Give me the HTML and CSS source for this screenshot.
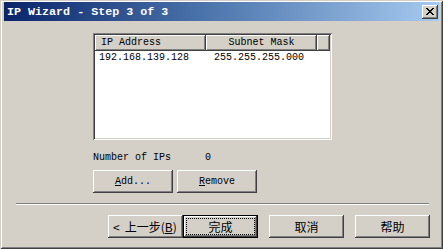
FILE: index.html
```html
<!DOCTYPE html>
<html>
<head>
<meta charset="utf-8">
<link rel="stylesheet" href="styles.css">
</head>
<body>
<div class="window">
  <div class="titlebar">
    <span class="title">IP Wizard - Step 3 of 3</span>
    <span class="close">
      <svg width="8" height="7" viewBox="0 0 8 7"><path d="M0 0h2v1h1v1h2v-1h1v-1h2v1h-1v1h-1v1h-1v1h1v1h1v1h1v1h-2v-1h-1v-1h-2v1h-1v1h-2v-1h1v-1h1v-1h1v-1h-1v-1h-1v-1h-1z" fill="#000"/></svg>
    </span>
  </div>
  <div class="content">
    <div class="listbox">
      <div class="lv-header">
        <div class="lv-col c1">IP Address</div>
        <div class="lv-col c2">Subnet Mask</div>
        <div class="lv-col c3"></div>
      </div>
      <div class="lv-row">
        <span class="cell c1">192.168.139.128</span>
        <span class="cell c2">255.255.255.000</span>
      </div>
    </div>
    <div class="info">
      <span class="label">Number of IPs</span>
      <span class="count">0</span>
    </div>
    <div class="btnrow">
      <button class="btn wide"><u>A</u>dd...</button>
      <button class="btn wide"><u>R</u>emove</button>
    </div>
    <div class="sep"></div>
    <div class="navrow">
      <button class="btn cjk back"><span class="lt">&lt;</span>上一步(<u>B</u>)</button>
      <button class="btn cjk default"><span class="focus">完成</span></button>
      <button class="btn cjk gap1">取消</button>
      <button class="btn cjk gap2">帮助</button>
    </div>
  </div>
</div>
</body>
</html>
```

FILE: styles.css
```css
* { box-sizing: border-box; }
html, body { margin: 0; padding: 0; }
body {
  width: 443px;
  height: 249px;
  background: #d4d0c8;
  overflow: hidden;
  font-family: "Liberation Mono", "DejaVu Sans Mono", monospace;
  font-size: 10px;
  color: #000;
}
.window {
  width: 443px;
  height: 249px;
  background: #d4d0c8;
  padding: 2px 4px 0 4px;
  box-shadow: inset 1px 1px 0 #d4d0c8, inset -1px -1px 0 #404040,
              inset 2px 2px 0 #ffffff, inset -2px -2px 0 #808080;
  display: flex;
  flex-direction: column;
}
.titlebar {
  height: 19px;
  background: linear-gradient(to right, #0a246a 0%, #4a72aa 45%, #a6caf0 100%);
  display: flex;
  align-items: center;
  justify-content: space-between;
  padding: 0 1px 0 3px;
}
.title {
  color: #fff;
  font-weight: bold;
  font-size: 11.7px;
  font-family: "Liberation Mono", monospace;
  white-space: pre;
}
.close {
  width: 16px;
  height: 14px;
  background: #d4d0c8;
  box-shadow: inset -1px -1px 0 #404040, inset 1px 1px 0 #ffffff,
              inset -2px -2px 0 #808080;
  display: flex;
  align-items: center;
  justify-content: center;
  padding-bottom: 1px;
}
.close svg { display: block; }
.content {
  display: flex;
  flex-direction: column;
}
.listbox {
  margin: 12px 0 0 89px;
  width: 239px;
  height: 107px;
  background: #fff;
  padding: 2px;
  box-shadow: inset 1px 1px 0 #808080, inset -1px -1px 0 #ffffff,
              inset 2px 2px 0 #404040, inset -2px -2px 0 #d4d0c8;
}
.lv-header {
  display: flex;
  height: 16px;
}
.lv-col {
  height: 16px;
  background: #d4d0c8;
  box-shadow: inset -1px -1px 0 #404040, inset 1px 1px 0 #ffffff,
              inset -2px -2px 0 #808080;
  line-height: 15px;
  white-space: pre;
}
.lv-col.c1 { width: 111px; padding-left: 6px; }
.lv-col.c2 { width: 111px; text-align: center; }
.lv-col.c3 { flex: 1; }
.lv-row {
  display: flex;
  height: 13px;
  line-height: 13px;
  padding-left: 4px;
}
.cell.c1 { width: 115px; }
.info {
  margin: 12px 0 0 89px;
  height: 12px;
  line-height: 12px;
  display: flex;
}
.info .label { width: 112px; }
.btnrow {
  margin: 6px 0 0 89px;
  display: flex;
  gap: 4px;
}
.btn {
  width: 75px;
  height: 23px;
  margin: 0;
  padding: 0;
  border: none;
  background: #d4d0c8;
  box-shadow: inset -1px -1px 0 #404040, inset 1px 1px 0 #ffffff,
              inset -2px -2px 0 #808080;
  font-family: "Liberation Mono", monospace;
  font-size: 10px;
  color: #000;
  display: flex;
  align-items: center;
  justify-content: center;
}
.btn.wide { width: 80px; }
.btn u { text-decoration: underline; }
.btn.cjk {
  font-family: "Noto Sans CJK SC", "Liberation Sans", sans-serif;
  font-size: 12px;
}
.btn.back { justify-content: flex-start; padding-left: 5px; }
.lt { margin-right: 5px; }
.sep {
  margin: 10px 0 0 12px;
  width: 413px;
  height: 2px;
  border-top: 1px solid #808080;
  border-bottom: 1px solid #ffffff;
}
.navrow {
  margin: 10px 0 0 104px;
  display: flex;
}
.btn.default {
  box-shadow: inset 0 0 0 1px #000, inset -2px -2px 0 #404040,
              inset 2px 2px 0 #ffffff, inset -3px -3px 0 #808080;
}
.focus {
  display: flex;
  align-items: center;
  justify-content: center;
  width: 67px;
  height: 15px;
  outline: 1px dotted #000;
}
.gap1 { margin-left: 11px; }
.gap2 { margin-left: 11px; }
```
